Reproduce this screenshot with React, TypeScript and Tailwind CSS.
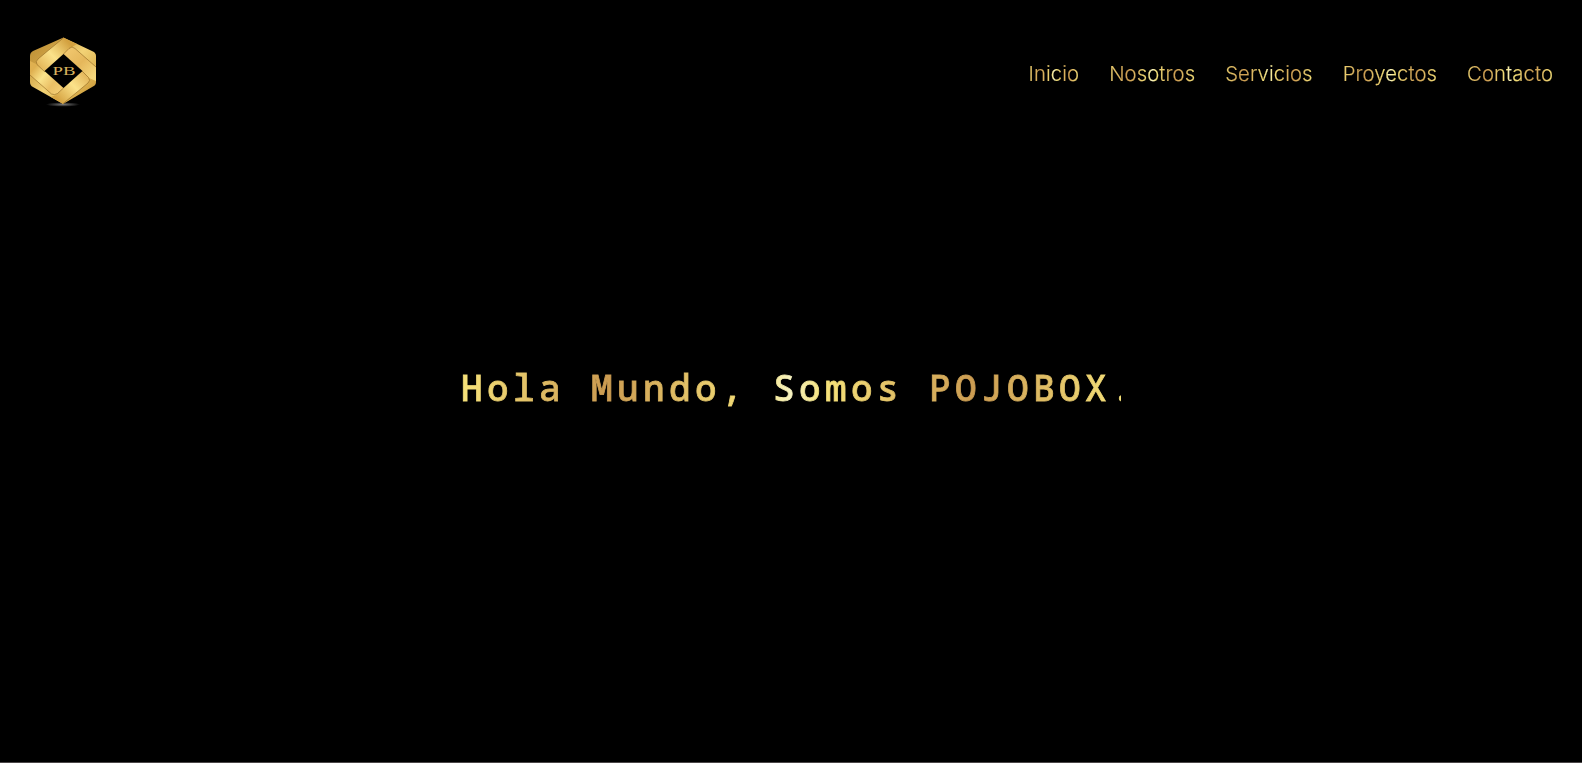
const links = ["Inicio", "Nosotros", "Servicios", "Proyectos", "Contacto"];

function Logo() {
  return (
    <svg viewBox="0 0 86 84" className="h-[84px] w-[86px] shrink-0" aria-label="PB">
      <defs>
        <linearGradient id="frame" x1="0" y1="0" x2="1" y2="1">
          <stop offset="0" stopColor="#b98a30" />
          <stop offset=".22" stopColor="#c99c40" />
          <stop offset=".5" stopColor="#f3d376" />
          <stop offset=".8" stopColor="#d8ab49" />
          <stop offset="1" stopColor="#b5842c" />
        </linearGradient>
        <linearGradient id="up" gradientUnits="userSpaceOnUse" x1="18" y1="40" x2="48" y2="12">
          <stop offset="0" stopColor="#e0ae50" />
          <stop offset=".5" stopColor="#fbe28a" />
          <stop offset="1" stopColor="#d3a140" />
        </linearGradient>
        <linearGradient id="down" gradientUnits="userSpaceOnUse" x1="40" y1="72" x2="68" y2="46">
          <stop offset="0" stopColor="#d6a443" />
          <stop offset=".55" stopColor="#fbe28a" />
          <stop offset="1" stopColor="#e3b559" />
        </linearGradient>
        <linearGradient id="right" gradientUnits="userSpaceOnUse" x1="48" y1="20" x2="74" y2="46">
          <stop offset="0" stopColor="#f0c66d" />
          <stop offset=".5" stopColor="#e5b75b" />
          <stop offset="1" stopColor="#f5d77c" />
        </linearGradient>
        <linearGradient id="left" gradientUnits="userSpaceOnUse" x1="11" y1="42" x2="38" y2="64">
          <stop offset="0" stopColor="#dfb050" />
          <stop offset=".35" stopColor="#fae38b" />
          <stop offset=".7" stopColor="#eabf65" />
          <stop offset="1" stopColor="#f3cd74" />
        </linearGradient>
        <radialGradient id="shade">
          <stop offset="0" stopColor="#777" />
          <stop offset="1" stopColor="#000" />
        </radialGradient>
      </defs>
      <ellipse cx="43" cy="74.500" rx="17" ry="2.300" fill="url(#shade)" />
      <path d="M43.500 7.500 73 21.500q3 1.500 3 4.500v26q0 3-3 4.500L43 74 13 57q-3-1.500-3-5V26q0-3.500 3-5z" fill="url(#frame)" />
      <path d="M43.500 7.800 18 29q-3 2.500-1 5.500l8 7.500L52 17l5-3z" fill="url(#up)" />
      <path d="M43.500 24 49 18.500q3-3 6 0L76 37v14L69 48l-7-7z" fill="url(#right)" />
      <path d="M62 41l6.500 6.500q2.500 3-.5 5.500L43 73.700 31 67l5-2z" fill="url(#down)" />
      <path d="M25 41l18.500 17-6 5.500q-3 2-6 .5L10 45V31l7 3.500z" fill="url(#left)" />
      <g fill="none" stroke="#8d6420" strokeWidth=".6">
        <path d="M43.500 7.800 18 29q-3 2.500-1 5.500l8 7.500" />
        <path d="M43.500 24 49 18.500q3-3 6 0L76 37" />
        <path d="M62 41l6.500 6.500q2.500 3-.5 5.500L43 73.700" />
        <path d="M43.500 58l-6 5.500q-3 2-6 .5L10 45" />
      </g>
      <path d="m43.500 24 19 17-19 17-19-17z" fill="#000" />
      <text x="32.500" y="45" fontFamily="Liberation Serif" fontSize="13.500" textLength="23" lengthAdjust="spacingAndGlyphs" fill="#d8b35e">PB</text>
    </svg>
  );
}

export default function App() {
  return (
    <div className="flex h-[763px] flex-col overflow-hidden border-b border-[#4b4748] bg-black">
      <header className="flex h-[144px] items-center justify-between pl-5 pr-[29px]">
        <Logo />
        <nav className="flex gap-[30px] pt-1 font-['Inter',sans-serif] text-[20.3px] leading-[30px] font-light tracking-[0.08px]">
          {links.map((l) => (
            <a key={l} href="#" className="bg-[linear-gradient(90deg,#ecd070,#cb9b51_22%,#f6e27a_45%,#f6f2c0_50%,#f6e27a_55%,#cb9b51_78%,#f6e27a)] bg-clip-text text-transparent [-webkit-text-stroke:0.2px_transparent]">{l}</a>
          ))}
        </nav>
      </header>
      <main className="flex h-[488px] items-center justify-center">
        <h1 className="w-[660px] overflow-hidden whitespace-nowrap bg-[linear-gradient(90deg,#f6e27a,#cb9b51_22%,#f6e27a_45%,#f6f2c0_50%,#f6e27a_55%,#cb9b51_78%,#f6e27a)] bg-clip-text font-['Noto_Sans_Mono','DejaVu_Sans_Mono',monospace] text-[36px] font-medium tracking-[4.4px] text-transparent [-webkit-text-stroke:0.8px_transparent]">Hola Mundo, Somos POJOBOX.</h1>
      </main>
    </div>
  );
}
